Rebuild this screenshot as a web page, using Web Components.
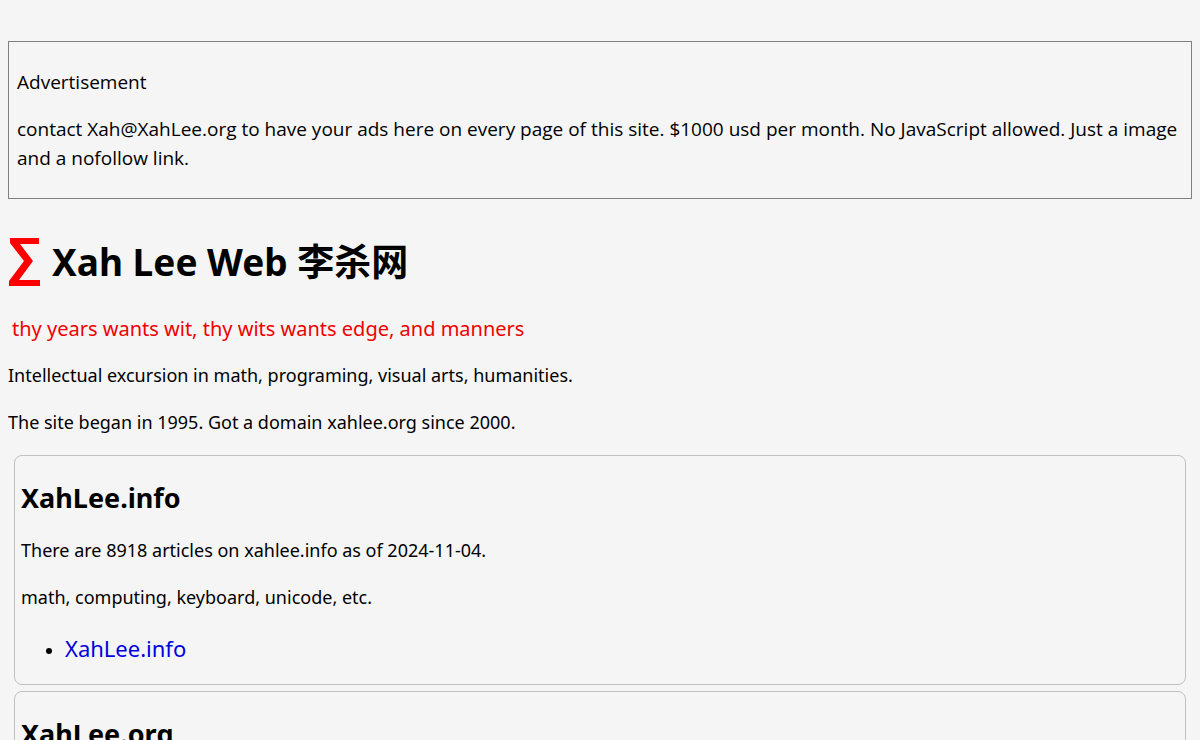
<!DOCTYPE html>
<html lang="en"><head><meta charset="utf-8"><title>Xah Lee Web 李杀网</title>
<style>
html{background:#f5f5f5}
body{margin:8px;color:#000;font-family:"Noto Sans","Noto Sans CJK SC",sans-serif;font-size:18px;line-height:29px}
</style></head><body>
<home-page></home-page>
<script>
const define=(name,html)=>customElements.define(name,class extends HTMLElement{
  constructor(){super();this.attachShadow({mode:"open"}).innerHTML=html;}
});
define("ad-box",`<style>:host{display:block;border:1px solid gray;padding:8px;font-family:"Open Sans",sans-serif;font-size:19px}p{margin:18px 0}p:last-child{margin-bottom:17px}</style>
<p><slot name="label"></slot></p><p><slot></slot></p>`);
define("site-title",`<style>:host{display:block}h1{display:flex;align-items:center;gap:12px;margin:0;font-size:37px;line-height:48px}
svg{width:32px;height:48px;flex:none}</style>
<h1><svg viewBox="0 0 32 48" aria-hidden="true"><path fill="red" d="M2 0H31V6H12L25 23L11 42H32V48H1V43L16 23L2 5Z"/></svg><span><slot></slot></span></h1>`);
define("site-card",`<style>:host{display:block;border:1px solid silver;border-radius:8px;margin:6px;padding:6px}
h2{font-size:27px;line-height:40px;margin:16px 0 18px}</style>
<h2><slot name="title"></slot></h2><slot></slot>`);
define("home-page",`<style>:host{display:block;padding-top:33px}
p{margin:18px 0}ul{margin:18px 0 9px;padding-left:44px}li{line-height:37px}
a{color:#0000e0;text-decoration:none;font-size:22px}
.motto{color:#f00000;font-size:20px;margin:28px 4px 18px}
site-title{margin-top:39px}</style>
<ad-box><span slot="label">Advertisement</span>contact Xah@XahLee.org to have your ads here on every page of this site. $1000 usd per month. No JavaScript allowed. Just a image and a nofollow link.</ad-box>
<site-title>Xah Lee Web 李杀网</site-title>
<p class="motto">thy years wants wit, thy wits wants edge, and manners</p>
<p>Intellectual excursion in math, programing, visual arts, humanities.</p>
<p>The site began in 1995. Got a domain xahlee.org since 2000.</p>
<site-card><span slot="title">XahLee.info</span>
<p>There are 8918 articles on xahlee.info as of 2024-11-04.</p>
<p>math, computing, keyboard, unicode, etc.</p>
<ul><li><a href="#info">XahLee.info</a></li></ul></site-card>
<site-card><span slot="title">XahLee.org</span></site-card>`);
</script></body></html>
